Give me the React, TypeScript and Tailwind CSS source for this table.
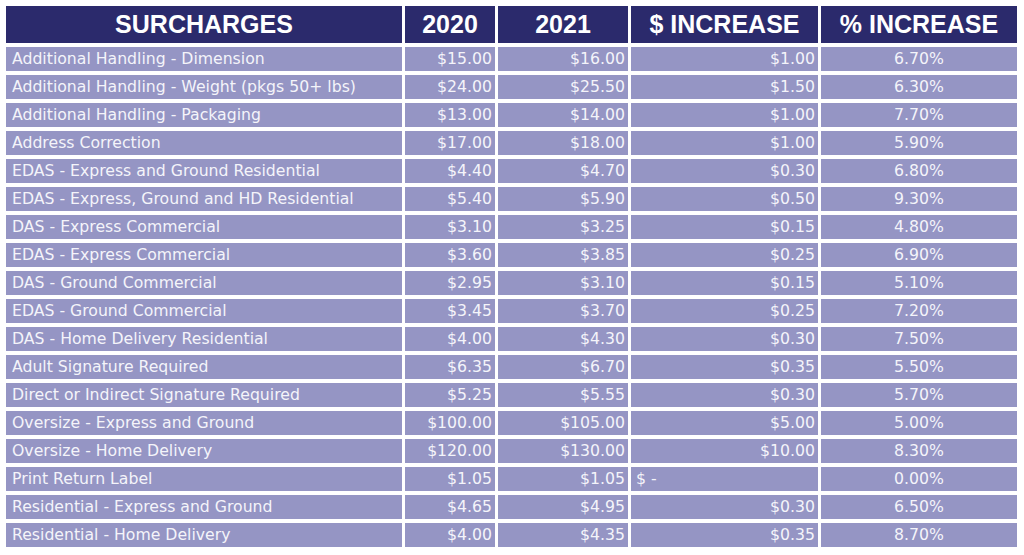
import React from 'react';

type Row = { name: string; y2020: string; y2021: string; inc: string; pct: string };

const rows: Row[] = [
  { name: 'Additional Handling - Dimension', y2020: '$15.00', y2021: '$16.00', inc: '$1.00', pct: '6.70%' },
  { name: 'Additional Handling - Weight (pkgs 50+ lbs)', y2020: '$24.00', y2021: '$25.50', inc: '$1.50', pct: '6.30%' },
  { name: 'Additional Handling - Packaging', y2020: '$13.00', y2021: '$14.00', inc: '$1.00', pct: '7.70%' },
  { name: 'Address Correction', y2020: '$17.00', y2021: '$18.00', inc: '$1.00', pct: '5.90%' },
  { name: 'EDAS - Express and Ground Residential', y2020: '$4.40', y2021: '$4.70', inc: '$0.30', pct: '6.80%' },
  { name: 'EDAS - Express, Ground and HD Residential', y2020: '$5.40', y2021: '$5.90', inc: '$0.50', pct: '9.30%' },
  { name: 'DAS - Express Commercial', y2020: '$3.10', y2021: '$3.25', inc: '$0.15', pct: '4.80%' },
  { name: 'EDAS - Express Commercial', y2020: '$3.60', y2021: '$3.85', inc: '$0.25', pct: '6.90%' },
  { name: 'DAS - Ground Commercial', y2020: '$2.95', y2021: '$3.10', inc: '$0.15', pct: '5.10%' },
  { name: 'EDAS - Ground Commercial', y2020: '$3.45', y2021: '$3.70', inc: '$0.25', pct: '7.20%' },
  { name: 'DAS - Home Delivery Residential', y2020: '$4.00', y2021: '$4.30', inc: '$0.30', pct: '7.50%' },
  { name: 'Adult Signature Required', y2020: '$6.35', y2021: '$6.70', inc: '$0.35', pct: '5.50%' },
  { name: 'Direct or Indirect Signature Required', y2020: '$5.25', y2021: '$5.55', inc: '$0.30', pct: '5.70%' },
  { name: 'Oversize - Express and Ground', y2020: '$100.00', y2021: '$105.00', inc: '$5.00', pct: '5.00%' },
  { name: 'Oversize - Home Delivery', y2020: '$120.00', y2021: '$130.00', inc: '$10.00', pct: '8.30%' },
  { name: 'Print Return Label', y2020: '$1.05', y2021: '$1.05', inc: '', pct: '0.00%' },
  { name: 'Residential - Express and Ground', y2020: '$4.65', y2021: '$4.95', inc: '$0.30', pct: '6.50%' },
  { name: 'Residential - Home Delivery', y2020: '$4.00', y2021: '$4.35', inc: '$0.35', pct: '8.70%' },
];

const head =
  'bg-[#2b2a6c] text-white font-bold text-[25px] flex items-center justify-center h-[37px] leading-none font-["Liberation_Sans",sans-serif]';
const cell = 'bg-[#9595c4] text-[#f4f4fa] text-[15.7px] h-[24px] flex items-center leading-none';

export default function App() {
  return (
    <div className="w-[1024px] h-[555px] bg-white pt-[6px] pl-[6px]" style={{ fontFamily: '"DejaVu Sans", sans-serif' }}>
      <div className="grid grid-cols-[396px_90px_130px_187px_196px] gap-x-[3px] gap-y-[4px]">
        <div className={head}>SURCHARGES</div>
        <div className={head}>2020</div>
        <div className={head}>2021</div>
        <div className={head}>$ INCREASE</div>
        <div className={head}>% INCREASE</div>
        {rows.map((r, i) => (
          <React.Fragment key={i}>
            <div className={`${cell} pl-[6px]`}>{r.name}</div>
            <div className={`${cell} justify-end pr-[3px]`}>{r.y2020}</div>
            <div className={`${cell} justify-end pr-[3px]`}>{r.y2021}</div>
            {r.inc ? (
              <div className={`${cell} justify-end pr-[3px]`}>{r.inc}</div>
            ) : (
              <div className={`${cell} pl-[5px]`}>$ -</div>
            )}
            <div className={`${cell} justify-center`}>{r.pct}</div>
          </React.Fragment>
        ))}
      </div>
    </div>
  );
}
